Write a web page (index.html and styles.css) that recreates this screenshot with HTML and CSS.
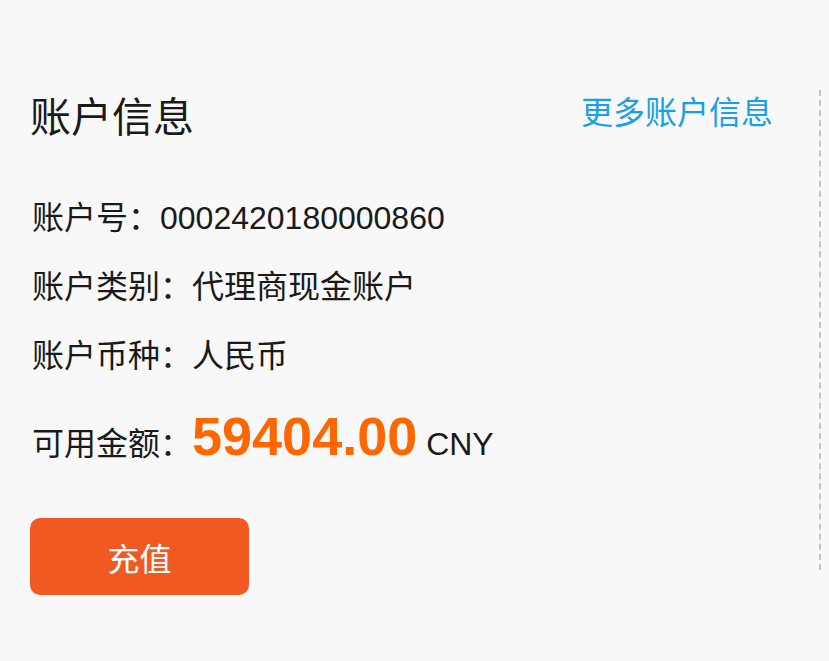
FILE: index.html
```html
<!DOCTYPE html>
<html>
<head>
<meta charset="utf-8" />
<title>账户信息</title>
<link rel="stylesheet" href="styles.css">
</head>
<body>
<div class="wrap">
	<div class="info">
		<div class="head">
			<h2 class="title">账户信息</h2>
			<a class="more" href="#">更多账户信息</a>
		</div>
		<ul class="rows">
			<li>账户号：0002420180000860</li>
			<li>账户类别：代理商现金账户</li>
			<li>账户币种：人民币</li>
			<li class="balance">可用金额：<span class="amount">59404.00</span> CNY</li>
		</ul>
		<a class="btn" href="#">充值</a>
	</div>
	<div class="divider"></div>
</div>
</body>
</html>
```

FILE: styles.css
```css
html, body {margin:0px;padding:0px;background:#f8f8f8;}
body {font-family:"Liberation Sans", "Noto Sans CJK SC", sans-serif;color:#1a1a1a;}
.wrap {display:flex;padding-top:90px;}
.info {width:819px;box-sizing:border-box;padding:0 46px 0 32px;}
.divider {width:0px;height:480px;border-right:2px dashed #c3c5cb;}
.head {display:flex;justify-content:space-between;align-items:flex-start;}
.title {margin:0 0 0 -2px;font-size:41px;font-weight:normal;line-height:56px;}
.more {font-size:32px;line-height:46px;color:#1aa0e8;text-decoration:none;}
.rows {margin:38px 0 0 0;padding:0px;list-style-type:none;}
.rows li {font-size:32px;line-height:69px;}
.rows li.balance {margin-top:18px;}
.amount {font-size:54px;line-height:54px;font-weight:bold;color:#ff6600;}
.btn {display:flex;align-items:center;justify-content:center;width:219px;height:77px;margin-top:39px;margin-left:-2px;border-radius:10px;background:#f05a22;color:#fff;font-size:32px;text-decoration:none;}
```
